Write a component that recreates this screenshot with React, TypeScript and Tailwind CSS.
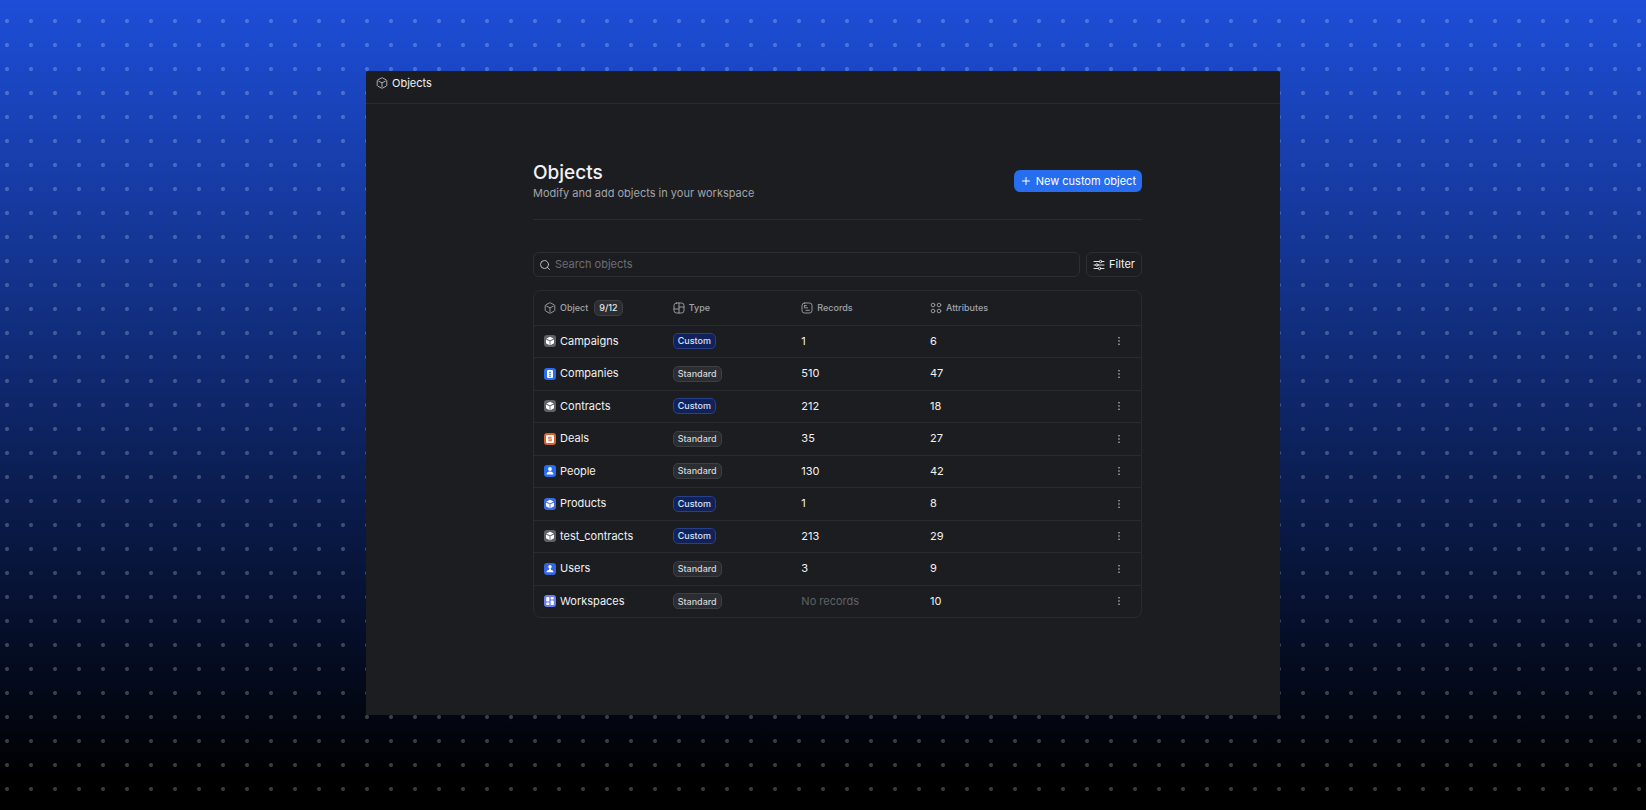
import type { ReactNode } from "react";
import { Plus, Search } from "lucide-react";

type ObjectType = "Custom" | "Standard";
type Glyph = "cube" | "building" | "deal" | "person" | "user" | "grid";

interface ObjectRow {
    name: string;
    glyph: Glyph;
    color: string;
    type: ObjectType;
    records: number;
    attributes: number;
}

const rows: ObjectRow[] = [
    { name: "Campaigns", glyph: "cube", color: "bg-[#5f6167]", type: "Custom", records: 1, attributes: 6 },
    { name: "Companies", glyph: "building", color: "bg-[#266df0]", type: "Standard", records: 510, attributes: 47 },
    { name: "Contracts", glyph: "cube", color: "bg-[#5f6167]", type: "Custom", records: 212, attributes: 18 },
    { name: "Deals", glyph: "deal", color: "bg-[#d9622b]", type: "Standard", records: 35, attributes: 27 },
    { name: "People", glyph: "person", color: "bg-[#266df0]", type: "Standard", records: 130, attributes: 42 },
    { name: "Products", glyph: "cube", color: "bg-[#3b6be0]", type: "Custom", records: 1, attributes: 8 },
    { name: "test_contracts", glyph: "cube", color: "bg-[#5f6167]", type: "Custom", records: 213, attributes: 29 },
    { name: "Users", glyph: "user", color: "bg-[#3566e0]", type: "Standard", records: 3, attributes: 9 },
    { name: "Workspaces", glyph: "grid", color: "bg-[#6b7df0]", type: "Standard", records: 0, attributes: 10 },
];

const LineIcon = ({ children }: { children: ReactNode }) => (
    <svg
        viewBox="0 0 12 12"
        fill="none"
        stroke="currentColor"
        strokeWidth="0.9"
        strokeLinecap="round"
        strokeLinejoin="round"
        className="size-3 shrink-0"
        aria-hidden="true"
    >
        {children}
    </svg>
);

const CubeIcon = () => (
    <LineIcon>
        <path d="M5.5 .9Q6 .6 6.5 .9L10.300 2.900Q10.800 3.200 10.800 3.800V8.200Q10.800 8.800 10.300 9.100L6.500 11.100Q6 11.400 5.500 11.100L1.700 9.100Q1.200 8.800 1.200 8.200V3.800Q1.200 3.200 1.700 2.900z" />
        <path d="M2.600 4.100 6 5.900l3.400-1.800M6 5.900v4" />
    </LineIcon>
);

const TypeIcon = () => (
    <LineIcon>
        <rect x="1" y="1" width="10" height="10" rx="2.5" />
        <path d="M6 1v10M1 7h5M6 5h5" />
    </LineIcon>
);

const RecordsIcon = () => (
    <LineIcon>
        <rect x="1" y="1" width="10" height="10" rx="2.5" />
        <path d="M3.400 3.600h2M3.400 3.600v2.200h3.200M5 8.300h3.400" />
    </LineIcon>
);

const AttributesIcon = () => (
    <LineIcon>
        <circle cx="3" cy="3" r="1.8" />
        <circle cx="9" cy="3" r="1.8" />
        <circle cx="3" cy="9" r="1.8" />
        <circle cx="9" cy="9" r="1.8" />
    </LineIcon>
);

const FilterIcon = () => (
    <LineIcon>
        <path d="M1 2.500h5.200M9 2.500h2M1 6h1.500M5.300 6H11M1 9.500h4.200M8 9.500h3" />
        <circle cx="7.6" cy="2.5" r="1.2" />
        <circle cx="3.9" cy="6" r="1.2" />
        <circle cx="6.6" cy="9.5" r="1.2" />
    </LineIcon>
);

const ObjectGlyph = ({ glyph, color }: { glyph: Glyph; color: string }) => (
    <span className={`flex size-3 shrink-0 items-center justify-center rounded-[3px] ${color}`}>
        <svg viewBox="0 0 12 12" fill="#fff" className="size-3" aria-hidden="true">
            {glyph === "cube" && (
                <>
                    <path d="M6 1.800 9.600 3.600 6 5.500 2.400 3.600z" />
                    <path d="M2 4.400 5.600 6.300v4L2 8.300zM10 4.400 6.400 6.300v4L10 8.300z" />
                </>
            )}
            {glyph === "building" && (
                <path
                    fillRule="evenodd"
                    d="M4 2h4a1 1 0 0 1 1 1v6a1 1 0 0 1-1 1H4a1 1 0 0 1-1-1V3a1 1 0 0 1 1-1zm1 1.700v1h2v-1zm0 2v1h2v-1zm0 2v1h2v-1z"
                />
            )}
            {glyph === "deal" && (
                <path
                    fillRule="evenodd"
                    d="M3.200 2h5.600a1.200 1.200 0 0 1 1.200 1.200v5.600A1.200 1.200 0 0 1 8.800 10H3.200A1.200 1.200 0 0 1 2 8.800V3.200A1.200 1.200 0 0 1 3.200 2zM4.300 3.700v2.800h2.500v.8H4.300v1h3.400V5.500H5.200v-.8h2.500v-1z"
                />
            )}
            {glyph === "person" && (
                <>
                    <circle cx="6" cy="4" r="1.9" />
                    <path d="M2.500 9.500c0-1.900 1.300-2.900 3.500-2.900s3.500 1 3.500 2.900z" />
                </>
            )}
            {glyph === "user" && (
                <>
                    <circle cx="6" cy="3.8" r="1.7" />
                    <path d="M5.200 5.200h1.600l.4 1.700c1.500.3 2.300 1 2.300 2.400h-7c0-1.400.8-2.100 2.300-2.400z" />
                </>
            )}
            {glyph === "grid" && (
                <>
                    <rect x="2.2" y="2" width="3.2" height="4.6" rx=".8" />
                    <rect x="2.2" y="7.6" width="3.2" height="2.4" rx=".8" />
                    <rect x="6.6" y="2" width="3.2" height="2.4" rx=".8" />
                    <rect x="6.6" y="5.4" width="3.2" height="4.6" rx=".8" />
                </>
            )}
        </svg>
    </span>
);

const TypeBadge = ({ type }: { type: ObjectType }) => (
    <span
        className={`inline-flex h-4 items-center rounded-[5px] border px-1 text-[9px] font-medium ${
            type === "Custom" ? "border-[#26408a] bg-[#11225a] text-[#d5e0fb]" : "border-[#3c3f45] bg-[#2b2d31] text-[#d3d5d9]"
        }`}
    >
        {type}
    </span>
);

const HeaderCell = ({ icon, children }: { icon: ReactNode; children: ReactNode }) => (
    <th scope="col" className="py-0 pr-0 pl-2.5 text-left font-medium">
        <span className="flex items-center gap-1">
            {icon}
            {children}
        </span>
    </th>
);

export default function App() {
    return (
        <div className="min-h-screen bg-[linear-gradient(to_bottom,#1d4ed8_0px,#000000_780px)] font-['Inter',sans-serif]">
            <div className="min-h-screen bg-[radial-gradient(circle,rgba(255,255,255,0.22)_1.6px,transparent_2.4px)] bg-[size:24px_24px] bg-[position:-5px_9px] px-4 pt-[71px] pb-20">
                <main className="mx-auto max-w-[914px] rounded-t-xs bg-[#1c1d20] pb-[97px] text-[#f0f1f3]">
                    <header className="border-b border-[#292b2f] px-2.5 pb-2">
                        <div className="flex h-6 items-center gap-1 text-[11px]">
                            <span className="text-[#b8bbc0]">
                                <CubeIcon />
                            </span>
                            Objects
                        </div>
                    </header>

                    <div className="pt-[57px] pr-[138px] pl-[167px]">
                        <div className="flex items-center justify-between border-b border-[#292b2f] pb-[18px]">
                            <div>
                                <h1 className="text-[19px] leading-6 font-medium">Objects</h1>
                                <p className="text-[11px] leading-4 text-[#a1a4aa]">Modify and add objects in your workspace</p>
                            </div>
                            <button className="flex h-[22px] items-center gap-1 rounded-md bg-[#266df0] px-1.5 text-[11px] text-white">
                                <Plus className="size-3" aria-hidden="true" />
                                New custom object
                            </button>
                        </div>

                        <div className="mt-8 flex gap-1.5">
                            <label className="flex h-[25px] flex-1 items-center gap-1 rounded-md border border-[#2c2e32] px-[5px]">
                                <Search className="size-3 shrink-0 text-[#b8bbc0]" aria-hidden="true" />
                                <input
                                    type="search"
                                    aria-label="Search objects"
                                    placeholder="Search objects"
                                    className="w-full bg-transparent text-[11px] outline-none placeholder:text-[#6b6e75]"
                                />
                            </label>
                            <button className="flex h-[25px] items-center gap-1 rounded-md border border-[#2c2e32] px-1.5 text-[11px]">
                                <FilterIcon />
                                Filter
                            </button>
                        </div>

                        <div className="mt-[13px] overflow-hidden rounded-lg border border-[#292b2f]">
                            <table className="w-full table-fixed border-collapse">
                                <colgroup>
                                    <col className="w-[21.2%]" />
                                    <col className="w-[21.2%]" />
                                    <col className="w-[21.2%]" />
                                    <col />
                                    <col className="w-11" />
                                </colgroup>
                                <thead>
                                    <tr className="h-[34px] text-[9px] text-[#a1a4aa]">
                                        <HeaderCell icon={<CubeIcon />}>
                                            Object
                                            <span className="ml-0.5 flex h-4 items-center rounded-[5px] border border-[#3c3f45] bg-[#2b2d31] px-1 text-[#e6e7ea]">
                                                9/12
                                            </span>
                                        </HeaderCell>
                                        <HeaderCell icon={<TypeIcon />}>Type</HeaderCell>
                                        <HeaderCell icon={<RecordsIcon />}>Records</HeaderCell>
                                        <HeaderCell icon={<AttributesIcon />}>Attributes</HeaderCell>
                                        <th aria-label="Actions" />
                                    </tr>
                                </thead>
                                <tbody>
                                    {rows.map((row) => (
                                        <tr key={row.name} className="h-8 border-t border-[#292b2f] text-[11px] even:h-[33px]">
                                            <td className="py-0 pr-0 pl-2.5">
                                                <span className="flex items-center gap-1">
                                                    <ObjectGlyph glyph={row.glyph} color={row.color} />
                                                    {row.name}
                                                </span>
                                            </td>
                                            <td className="py-0 pr-0 pl-2.5">
                                                <span className="flex">
                                                    <TypeBadge type={row.type} />
                                                </span>
                                            </td>
                                            <td className="py-0 pr-0 pl-2.5">
                                                {row.records > 0 ? row.records : <span className="text-[#5f6268]">No records</span>}
                                            </td>
                                            <td className="py-0 pr-0 pl-2.5">{row.attributes}</td>
                                            <td className="p-0">
                                                <button
                                                    className="mx-auto flex size-4 items-center justify-center text-[#c3c5ca]"
                                                    aria-label={`Actions for ${row.name}`}
                                                >
                                                    <svg viewBox="0 0 12 12" fill="currentColor" className="size-3" aria-hidden="true">
                                                        <circle cx="6" cy="2.7" r=".8" />
                                                        <circle cx="6" cy="6" r=".8" />
                                                        <circle cx="6" cy="9.3" r=".8" />
                                                    </svg>
                                                </button>
                                            </td>
                                        </tr>
                                    ))}
                                </tbody>
                            </table>
                        </div>
                    </div>
                </main>
            </div>
        </div>
    );
}
